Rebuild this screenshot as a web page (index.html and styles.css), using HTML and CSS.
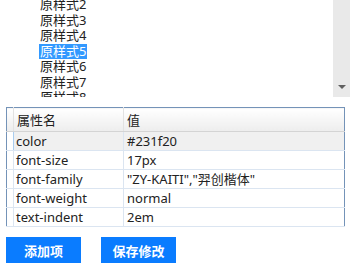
FILE: index.html
```html
<!DOCTYPE html>
<html lang="zh">
<head>
  <meta charset="UTF-8" />
  <title>样式编辑</title>
  <link rel="stylesheet" href="styles.css">
</head>
<body>
  <div class="listbox">
    <div class="list-items">
      <div class="item">原样式2</div>
      <div class="item">原样式3</div>
      <div class="item">原样式4</div>
      <div class="item selected">原样式5</div>
      <div class="item">原样式6</div>
      <div class="item">原样式7</div>
      <div class="item">原样式8</div>
    </div>
    <div class="scrollbar">
      <span class="arrow"></span>
    </div>
  </div>

  <table class="props">
    <thead>
      <tr><th class="gutter"></th><th class="name">属性名</th><th>值</th></tr>
    </thead>
    <tbody>
      <tr class="current"><td class="gutter"></td><td>color</td><td>#231f20</td></tr>
      <tr><td class="gutter"></td><td>font-size</td><td>17px</td></tr>
      <tr><td class="gutter"></td><td>font-family</td><td>"ZY-KAITI","羿创楷体"</td></tr>
      <tr><td class="gutter"></td><td>font-weight</td><td>normal</td></tr>
      <tr><td class="gutter"></td><td>text-indent</td><td>2em</td></tr>
    </tbody>
  </table>

  <div class="actions">
    <button class="btn">添加项</button>
    <button class="btn">保存修改</button>
  </div>
</body>
</html>
```

FILE: styles.css
```css
* { box-sizing: border-box; margin: 0; padding: 0; }
body {
  background: #fff;
  font-family: "Noto Sans", "Noto Sans CJK SC", sans-serif;
  font-size: 13px; color: #222;
  width: 352px; height: 274px; overflow: hidden;
}
.listbox {
  display: flex; height: 97px; width: 350px; overflow: hidden;
}
.list-items {
  flex: 1; padding-left: 39px; margin-top: -3px;
}
.item {
  height: 15.5px; line-height: 15.5px; padding-left: 1px;
  width: fit-content; padding-right: 1px;
}
.item.selected { background: #3399ff; color: #fff; }
.scrollbar {
  width: 17px; background: #e9e9e9;
  display: flex; align-items: flex-end; justify-content: center;
  padding-bottom: 8px;
}
.arrow {
  width: 0; height: 0;
  border-left: 4px solid transparent; border-right: 4px solid transparent;
  border-top: 4px solid #606060;
}
.props {
  margin: 10px 0 0 6px; width: 339px;
  border: 1px solid #7493b8; border-collapse: collapse;
  table-layout: fixed;
}
.props th, .props td {
  text-align: left; font-weight: normal; white-space: nowrap;
  padding: 0 0 0 3px; height: 19px; line-height: 18px;
  border-bottom: 1px solid #dbe5f1; border-left: 1px solid #dbe5f1;
}
.props td:first-child + td { padding-left: 2px; }
.props th {
  height: 24px; background: linear-gradient(#fff, #ededed);
  border-bottom: 1px solid #d4d4d4; border-left: 1px solid #e2e2e2;
}
.props .gutter { width: 7px; padding: 0; border-left: none; }
.props th.name { width: 110px; }
.props tr.current td { background: #f0f0f0; }
.props tr.current td.gutter { background: #fff; }
.props tr.current td:nth-child(2) { border-left-color: #a9cdf0; }
.actions {
  display: flex; gap: 20px; margin: 10px 0 0 6px;
}
.btn {
  width: 75px; height: 26px; border: none;
  background: #0a7cff; color: #fff;
  font-family: "Noto Sans CJK SC", sans-serif; font-size: 13px; font-weight: bold;
}
```
